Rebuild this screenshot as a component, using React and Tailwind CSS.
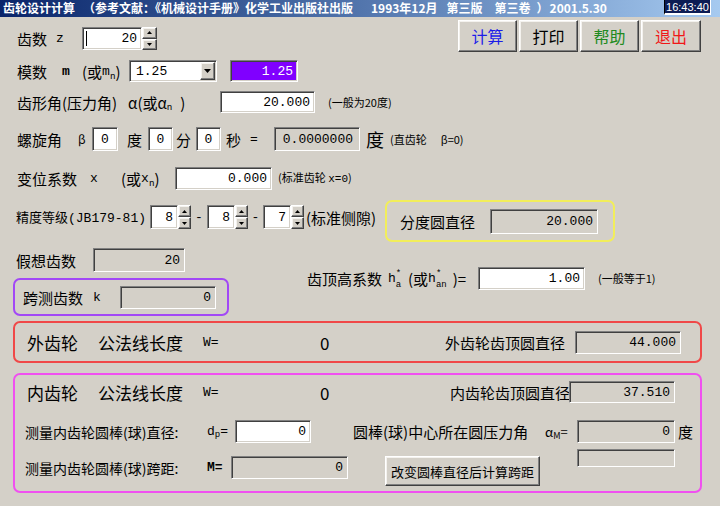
import React from "react";

const mono = "[font-family:'Liberation_Mono','DejaVu_Sans_Mono',monospace]";
const sunken =
  "border border-t-[#808080] border-l-[#808080] border-b-white border-r-white shadow-[inset_1px_1px_0_#404040,inset_-1px_-1px_0_#d4d0c8]";
const raised =
  "border border-t-white border-l-white border-b-[#404040] border-r-[#404040] shadow-[inset_-1px_-1px_0_#808080,inset_1px_1px_0_#f4f2ee]";

function Field({ className = "", bg = "bg-[#d4d0c8]", align = "end", children }) {
  const justify =
    align === "center" ? "justify-center" : "justify-end pr-[4px]";
  return (
    <div
      className={`flex items-center shrink-0 ${sunken} ${bg} ${justify} ${mono} text-[13px] leading-none ${className}`}
    >
      {children}
    </div>
  );
}

function Arrow({ up, w = 7, h = 4 }) {
  return (
    <svg width={w} height={h} viewBox={`0 0 ${w} ${h}`}>
      <polygon
        points={up ? `${w / 2},0 ${w},${h} 0,${h}` : `0,0 ${w},0 ${w / 2},${h}`}
        fill="#000"
      />
    </svg>
  );
}

function Spin({ className = "" }) {
  return (
    <div className={`flex flex-col shrink-0 h-full ${className}`}>
      <div className={`flex-1 flex items-center justify-center bg-[#d4d0c8] ${raised}`}>
        <Arrow up w={5} h={3} />
      </div>
      <div className={`flex-1 flex items-center justify-center bg-[#d4d0c8] ${raised}`}>
        <Arrow w={5} h={3} />
      </div>
    </div>
  );
}

function Btn({ className = "", children }) {
  return (
    <div className={`flex items-center justify-center shrink-0 bg-[#d4d0c8] leading-none ${raised} ${className}`}>
      {children}
    </div>
  );
}

function Sub({ children }) {
  return <span className="text-[9px] leading-none relative top-[4px]">{children}</span>;
}

// h with * above and a subscript below
function HStar({ sub }) {
  return (
    <span className="flex items-center">
      <span className={`${mono} text-[13px]`}>h</span>
      <span className={`flex flex-col gap-[2px] text-[9px] leading-[9px] mt-[2px] ${mono}`}>
        <span className="h-[9px]">*</span>
        <span className="h-[9px]">{sub}</span>
      </span>
    </span>
  );
}

function SmallSpinner({ value }) {
  return (
    <div className="flex h-[24px] shrink-0">
      <Field bg="bg-white" className="w-[28px] h-full">{value}</Field>
      <Spin className="w-[13px]" />
    </div>
  );
}

export default function App() {
  return (
    <div className="w-[720px] h-[506px] overflow-hidden bg-[#d4d0c8] flex flex-col text-black [font-family:'Noto_Sans_CJK_SC',sans-serif]">
      {/* title bar */}
      <div className="h-[17px] shrink-0 flex items-start bg-linear-to-r from-[#0a246a] to-[#a6caf0] text-white font-bold text-[12px] leading-[16px] whitespace-nowrap">
        <span className="ml-[3px]">齿轮设计计算</span>
        <span className="ml-[8px]">（参考文献：《机械设计手册》化学工业出版社出版</span>
        <span className="ml-[18px]">1993年12月</span>
        <span className="ml-[9px]">第三版</span>
        <span className="ml-[12px]">第三卷</span>
        <span className="ml-[6px]">）</span>
        <span className="ml-[1px]">2001.5.30</span>
        <div className="ml-auto mr-[9px] w-[47px] h-[15px] flex items-center justify-center bg-[#0c1c54] border-l border-l-black border-r border-r-white border-b-2 border-b-white text-white font-normal text-[11px] [font-family:'Liberation_Sans',sans-serif]">
          16:43:40
        </div>
      </div>

      {/* row 1 */}
      <div className="mt-[3px] h-[32px] shrink-0 flex pl-[17px]">
        <div className="self-end mb-[2px] h-[23px] w-[65px] shrink-0 flex items-center text-[15px] leading-none">
          齿数<span className={`${mono} text-[13px] ml-[9px]`}>z</span>
        </div>
        <div className="self-end mb-[2px] flex h-[23px] shrink-0">
          <Field bg="bg-white" className="w-[60px] h-full">
            <span className="w-[1px] h-[15px] bg-black ml-[3px] mr-auto" />
            20
          </Field>
          <Spin className="w-[15px]" />
        </div>
        <div className="ml-[301px] flex gap-[2px] text-[16px]">
          <Btn className="w-[59px] h-[32px] text-[#1c1ce8]">计算</Btn>
          <Btn className="w-[59px] h-[32px] text-black">打印</Btn>
          <Btn className="w-[59px] h-[32px] text-[#208a20]">帮助</Btn>
          <Btn className="w-[60px] h-[32px] text-[#f01818]">退出</Btn>
        </div>
      </div>

      {/* row 2 */}
      <div className="mt-[8px] h-[22px] shrink-0 flex items-center pl-[17px] text-[15px] leading-none">
        <span className="w-[45px] shrink-0">模数</span>
        <span className={`w-[20px] shrink-0 ${mono} text-[13px] font-bold`}>m</span>
        <span className="w-[47px] shrink-0 flex items-center whitespace-nowrap">
          (或<span className={`${mono} text-[13px]`}>m</span>
          <Sub>n</Sub>)
        </span>
        <div className={`w-[88px] h-[22px] shrink-0 flex items-center bg-white ${sunken} p-[1px]`}>
          <span className={`${mono} text-[13px] ml-[5px] flex-1`}>1.25</span>
          <div className={`w-[15px] h-full flex items-center justify-center bg-[#d4d0c8] ${raised}`}>
            <Arrow />
          </div>
        </div>
        <Field bg="bg-[#8000ff]" className="ml-[13px] w-[68px] h-[22px] text-white">
          1.25
        </Field>
      </div>

      {/* row 3 */}
      <div className="mt-[9px] h-[22px] shrink-0 flex items-center pl-[17px] text-[15px] leading-none">
        <span className="w-[111px] shrink-0 whitespace-nowrap">齿形角(压力角)</span>
        <span className="w-[92px] shrink-0 flex items-center whitespace-nowrap">
          α(或α<Sub>n</Sub>
          <span className="ml-[8px]">)</span>
        </span>
        <Field bg="bg-white" className="w-[95px] h-[22px]">20.000</Field>
        <span className="ml-[13px] text-[11px] whitespace-nowrap">(一般为20度)</span>
      </div>

      {/* row 4 */}
      <div className="mt-[14px] h-[24px] shrink-0 flex items-center pl-[17px] text-[15px] leading-none whitespace-nowrap">
        <span className="w-[61px] shrink-0">螺旋角</span>
        <span className="w-[14px] shrink-0 text-[12px]">β</span>
        <Field bg="bg-white" align="center" className="w-[26px] h-[24px]">0</Field>
        <span className="w-[30px] shrink-0 pl-[9px]">度</span>
        <Field bg="bg-white" align="center" className="w-[25px] h-[24px]">0</Field>
        <span className="w-[23px] shrink-0 pl-[3px]">分</span>
        <Field bg="bg-white" align="center" className="w-[25px] h-[24px]">0</Field>
        <span className="w-[29px] shrink-0 pl-[5px]">秒</span>
        <span className={`w-[24px] shrink-0 ${mono} text-[13px]`}>=</span>
        <Field className="w-[86px] h-[24px] pr-[6px]">0.0000000</Field>
        <span className="ml-[6px] text-[18px]">度</span>
        <span className="ml-[6px] text-[11px]">(直齿轮</span>
        <span className="ml-[14px] text-[11px]">β=0)</span>
      </div>

      {/* row 5 */}
      <div className="mt-[16px] h-[23px] shrink-0 flex items-center pl-[17px] text-[15px] leading-none whitespace-nowrap">
        <span className="w-[73px] shrink-0">变位系数</span>
        <span className={`w-[31px] shrink-0 ${mono} text-[13px]`}>x</span>
        <span className="w-[54px] shrink-0 flex items-center">
          (或<span className={`${mono} text-[13px]`}>x</span>
          <Sub>n</Sub>)
        </span>
        <Field bg="bg-white" className="w-[97px] h-[23px]">0.000</Field>
        <span className="ml-[6px] text-[11px]">
          (标准齿轮 <span className={mono}>x=0</span>)
        </span>
      </div>

      {/* row 6 */}
      <div className="mt-[10px] h-[42px] shrink-0 flex items-center pl-[16px] leading-none whitespace-nowrap">
        <div className="flex items-center mb-[8px] h-[24px]">
          <span className="w-[134px] shrink-0 text-[13px]">
            精度等级<span className={mono}>(JB179-81)</span>
          </span>
          <SmallSpinner value="8" />
          <span className={`w-[16px] shrink-0 text-center ${mono} text-[13px]`}>-</span>
          <SmallSpinner value="8" />
          <span className={`w-[15px] shrink-0 text-center ${mono} text-[13px]`}>-</span>
          <SmallSpinner value="7" />
          <span className="w-[81px] shrink-0 pl-[2px] text-[15px]">(标准侧隙)</span>
        </div>
        <div className="w-[230px] h-[42px] shrink-0 rounded-[7px] border-2 border-[#f2ee5a] flex items-center pl-[13px]">
          <span className="w-[90px] shrink-0 text-[15px]">分度圆直径</span>
          <Field className="w-[108px] h-[25px]">20.000</Field>
        </div>
      </div>

      {/* rows 7 / 8 */}
      <div className="mt-[6px] shrink-0 flex items-start pl-[13px] leading-none whitespace-nowrap">
        <div className="flex flex-col w-[216px] shrink-0">
          <div className="h-[24px] flex items-center">
            <span className="w-[80px] shrink-0 pl-[3px] text-[15px]">假想齿数</span>
            <Field className="w-[92px] h-[24px]">20</Field>
          </div>
          <div className="mt-[6px] h-[38px] rounded-[7px] border-2 border-[#a248f6] flex items-center pl-[8px]">
            <span className="w-[70px] shrink-0 text-[15px]">跨测齿数</span>
            <span className={`w-[27px] shrink-0 ${mono} text-[13px]`}>k</span>
            <Field className="w-[96px] h-[23px]">0</Field>
          </div>
        </div>
        <div className="ml-[78px] mt-[19px] h-[23px] flex items-center">
          <span className="w-[81px] shrink-0 text-[15px]">齿顶高系数</span>
          <span className="w-[20px] shrink-0 flex items-center">
            <HStar sub="a" />
          </span>
          <span className="w-[70px] shrink-0 flex items-center text-[15px]">
            (或<HStar sub="an" />
            <span className="ml-[6px]">)=</span>
          </span>
          <Field bg="bg-white" className="w-[107px] h-[23px]">1.00</Field>
          <span className="ml-[13px] text-[11px]">(一般等于1)</span>
        </div>
      </div>

      {/* external gear */}
      <div className="mt-[5px] ml-[13px] w-[689px] h-[42px] shrink-0 rounded-[7px] border-2 border-[#f04848] flex items-center pl-[12px] leading-none whitespace-nowrap">
        <span className="w-[71px] shrink-0 text-[17px]">外齿轮</span>
        <span className="w-[105px] shrink-0 text-[17px]">公法线长度</span>
        <span className={`w-[117px] shrink-0 ${mono} text-[13px]`}>W=</span>
        <span className="w-[125px] shrink-0 text-[17px]">0</span>
        <span className="w-[130px] shrink-0 text-[15px]">外齿轮齿顶圆直径</span>
        <Field className="w-[106px] h-[23px]">44.000</Field>
      </div>

      {/* internal gear */}
      <div className="mt-[10px] ml-[13px] w-[689px] h-[120px] shrink-0 rounded-[7px] border-2 border-[#f050f0] flex flex-col leading-none whitespace-nowrap">
        <div className="mt-[6px] h-[22px] flex items-center pl-[12px]">
          <span className="w-[71px] shrink-0 text-[17px]">内齿轮</span>
          <span className="w-[105px] shrink-0 text-[17px]">公法线长度</span>
          <span className={`w-[117px] shrink-0 ${mono} text-[13px]`}>W=</span>
          <span className="w-[130px] shrink-0 text-[17px]">0</span>
          <span className="w-[119px] shrink-0 text-[15px]">内齿轮齿顶圆直径</span>
          <Field className="w-[106px] h-[22px]">37.510</Field>
        </div>
        <div className="mt-[17px] h-[23px] flex items-center pl-[10px]">
          <span className="w-[182px] shrink-0 text-[14px]">测量内齿轮圆棒(球)直径:</span>
          <span className={`w-[28px] shrink-0 flex items-center ${mono} text-[13px]`}>
            d<Sub>p</Sub>=
          </span>
          <Field bg="bg-white" className="w-[76px] h-[23px]">0</Field>
          <span className="ml-[42px] w-[192px] shrink-0 text-[15px]">圆棒(球)中心所在圆压力角</span>
          <span className="w-[32px] shrink-0 flex items-center text-[13px]">
            α<Sub>M</Sub>=
          </span>
          <Field className="w-[98px] h-[23px]">0</Field>
          <span className="ml-[3px] text-[15px]">度</span>
        </div>
        <div className="mt-[6px] flex items-start pl-[10px]">
          <div className="mt-[7px] h-[23px] flex items-center">
            <span className="w-[182px] shrink-0 text-[14px]">测量内齿轮圆棒(球)跨距:</span>
            <span className={`w-[24px] shrink-0 ${mono} text-[13px] font-bold`}>M=</span>
            <Field className="w-[117px] h-[23px]">0</Field>
          </div>
          <Btn className="mt-[7px] ml-[37px] w-[155px] h-[30px] text-[13px]">改变圆棒直径后计算跨距</Btn>
          <Field className="ml-[37px] w-[98px] h-[18px]" />
        </div>
      </div>
    </div>
  );
}
